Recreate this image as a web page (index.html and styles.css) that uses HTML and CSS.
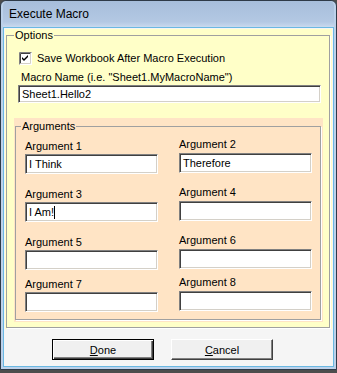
FILE: index.html
```html
<!DOCTYPE html>
<html lang="en">
<head>
    <meta charset="UTF-8">
    <title>Execute Macro</title>
    <link rel="stylesheet" href="styles.css">
</head>
<body>
    <div class="window">
        <div class="titlebar">Execute Macro</div>

        <div class="client">
            <!-- Painel amarelo de opções -->
            <div class="options-panel">
                <fieldset class="group options">
                    <legend>Options</legend>

                    <label class="check">
                        <svg class="checkbox" width="13" height="13" viewBox="0 0 13 13">
                            <rect x="0" y="0" width="13" height="13" fill="#fff"/>
                            <path d="M0.5 12.5 V0.5 H12.5" fill="none" stroke="#808080"/>
                            <path d="M1.5 11.5 V1.5 H11.5" fill="none" stroke="#404040"/>
                            <path d="M1.5 11.5 H11.5 V1.5" fill="none" stroke="#d4d0c8"/>
                            <path d="M3 5 L5 7 L9 3 V5 L5 9 L3 7 Z" fill="#000"/>
                        </svg>
                        Save Workbook After Macro Execution
                    </label>

                    <div class="macro-label">Macro Name (i.e. "Sheet1.MyMacroName")</div>
                    <div class="textbox macro-box">Sheet1.Hello2</div>

                    <!-- Painel de argumentos -->
                    <div class="args-panel">
                        <fieldset class="group args">
                            <legend>Arguments</legend>
                            <div class="arg-grid">
                                <div class="field">
                                    <div class="field-label">Argument 1</div>
                                    <div class="textbox">I Think</div>
                                </div>
                                <div class="field right">
                                    <div class="field-label">Argument 2</div>
                                    <div class="textbox">Therefore</div>
                                </div>
                                <div class="field">
                                    <div class="field-label">Argument 3</div>
                                    <div class="textbox">I Am!<span class="caret"></span></div>
                                </div>
                                <div class="field right">
                                    <div class="field-label">Argument 4</div>
                                    <div class="textbox"></div>
                                </div>
                                <div class="field">
                                    <div class="field-label">Argument 5</div>
                                    <div class="textbox"></div>
                                </div>
                                <div class="field right">
                                    <div class="field-label">Argument 6</div>
                                    <div class="textbox"></div>
                                </div>
                                <div class="field">
                                    <div class="field-label">Argument 7</div>
                                    <div class="textbox"></div>
                                </div>
                                <div class="field right">
                                    <div class="field-label">Argument 8</div>
                                    <div class="textbox"></div>
                                </div>
                            </div>
                        </fieldset>
                    </div>
                </fieldset>
            </div>

            <!-- Botões -->
            <div class="buttons">
                <button class="btn default"><u>D</u>one</button>
                <button class="btn"><u>C</u>ancel</button>
            </div>
        </div>
    </div>
</body>
</html>
```

FILE: styles.css
```css
* {
    box-sizing: border-box;
    margin: 0;
    padding: 0;
}

body {
    background-color: #4d4d4d;
    font-family: 'Liberation Sans', Arial, sans-serif;
    font-size: 11px;
    line-height: 13px;
    color: #000;
    width: 337px;
    height: 373px;
    overflow: hidden;
}

/* Janela */
.window {
    width: 337px;
    height: 370px;
    border: 1px solid #2e3a48;
    border-radius: 6px 6px 0 0;
    background-color: #bcd1ea;
    padding: 0 2px 2px 2px;
    display: flex;
    flex-direction: column;
}

.titlebar {
    height: 26px;
    flex: none;
    padding-left: 6px;
    font-size: 12px;
    line-height: 26px;
    background: linear-gradient(#a7bedb, #b3c8e3 80%, #c9d9ee);
    border-radius: 5px 5px 0 0;
}

.client {
    flex: 1;
    background-color: #f5f5f5;
    border: 1px solid #6ab8e2;
}

/* Painel de opções */
.options-panel {
    background-color: #ffffc8;
    margin: 1px 1px 0 1px;
    padding: 0 2px 1px 1px;
}

.group {
    border: 1px solid #a0a0a0;
    box-shadow: 1px 1px 0 #fff;
    min-width: 0;
}

.group legend {
    line-height: 13px;
}

.options {
    padding: 10px 6px 5px 7px;
}

.options legend {
    padding: 0 1px;
}

.check {
    display: flex;
    align-items: center;
    height: 13px;
    margin-left: 5px;
}

.checkbox {
    display: block;
    margin-right: 5px;
}

.macro-label {
    margin: 6px 0 1px 7px;
}

.textbox {
    position: relative;
    height: 20px;
    background-color: #fff;
    border-top: 1px solid #808080;
    border-left: 1px solid #808080;
    border-right: 1px solid #fff;
    border-bottom: 1px solid #fff;
    box-shadow: inset 1px 1px 0 #404040, inset -1px -1px 0 #d4d0c8;
    padding: 3px 3px 0 3px;
    white-space: nowrap;
}

.macro-box {
    height: 18px;
    width: 303px;
    margin-left: 4px;
    padding-top: 2px;
}

.caret {
    display: inline-block;
    width: 1px;
    height: 13px;
    background-color: #000;
    vertical-align: top;
}

/* Painel de argumentos */
.args-panel {
    background-color: #ffe4c5;
    margin-top: 15px;
    padding: 2px 2px 2px 1px;
}

.args {
    padding: 7px 7px 7px 9px;
}

.args legend {
    margin-left: -4px;
    padding: 0 1px;
}

.arg-grid {
    display: grid;
    grid-template-columns: 133px 133px;
    grid-template-rows: 48px 48px 42px 34px;
    column-gap: 21px;
}

.field-label {
    margin-bottom: 1px;
}

.field.right {
    margin-top: -2px;
}

.field.right .field-label {
    margin-bottom: 2px;
}

/* Botões */
.buttons {
    display: flex;
    gap: 17px;
    padding: 10px 0 0 48px;
}

.btn {
    width: 102px;
    height: 21px;
    font-family: inherit;
    font-size: 11px;
    color: #000;
    background-color: #f0f0f0;
    border-top: 1px solid #fff;
    border-left: 1px solid #fff;
    border-right: 1px solid #404040;
    border-bottom: 1px solid #404040;
    box-shadow: inset -1px -1px 0 #808080;
}

.btn.default {
    border: 1px solid #000;
    box-shadow: inset 1px 1px 0 #fff, inset -1px -1px 0 #404040, inset -2px -2px 0 #808080;
}
```
